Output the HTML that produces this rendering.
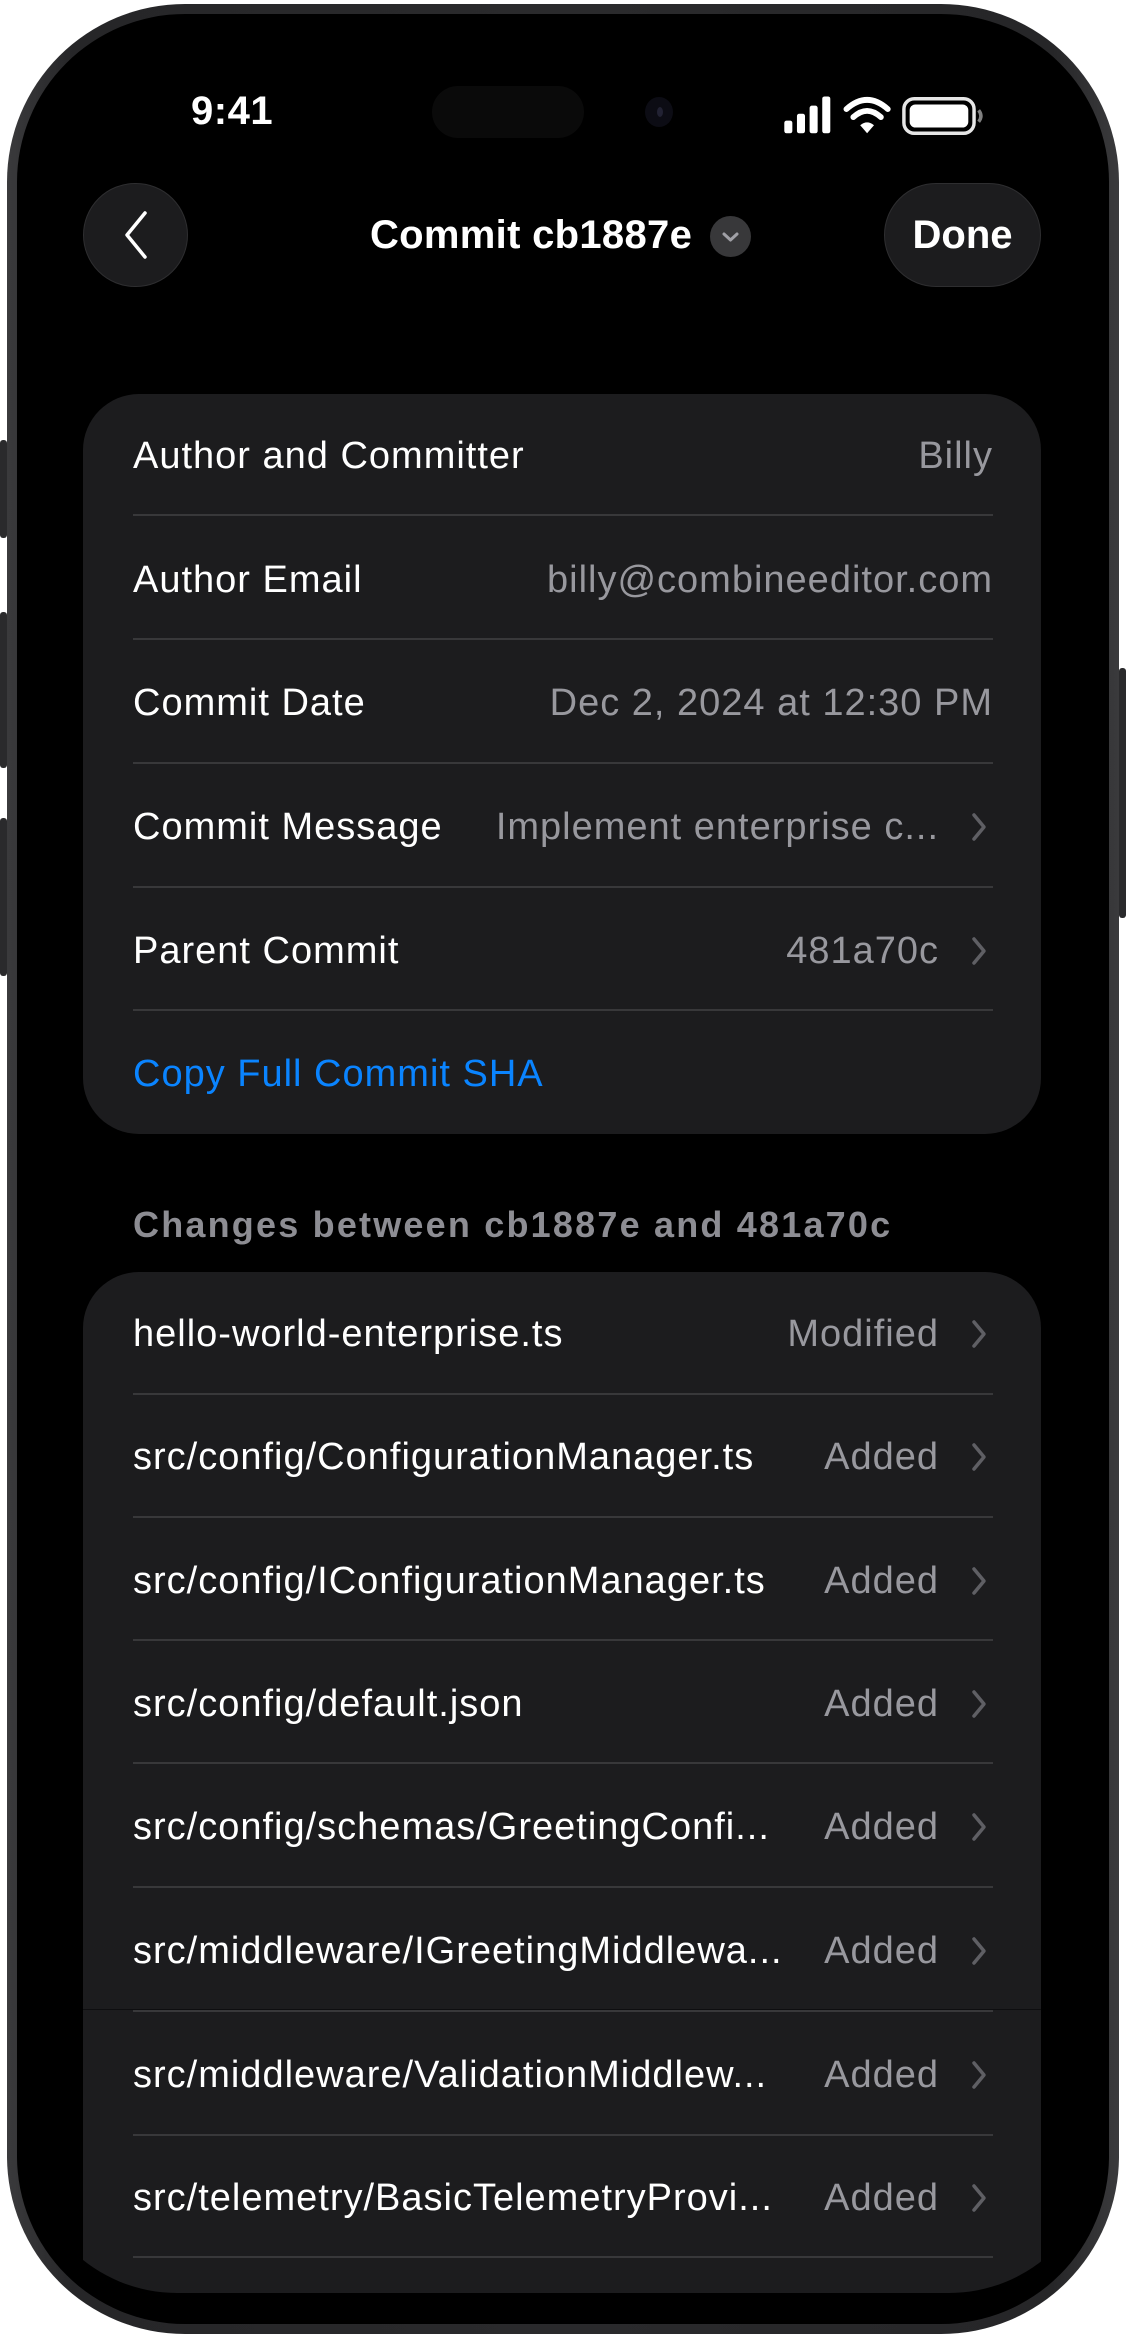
<!DOCTYPE html>
<html><head><meta charset="utf-8"><style>
*{margin:0;padding:0;box-sizing:border-box}
html,body{width:1126px;height:2338px;background:#fff;overflow:hidden;font-family:"Liberation Sans",sans-serif}
.abs{position:absolute}
#frame{left:7px;top:4px;width:1112px;height:2330px;border-radius:178px;background:linear-gradient(90deg,#3a3a3c,#262628 6%,#2a2a2c 50%,#262628 94%,#3a3a3c);}
#bezel{left:17px;top:14px;width:1092px;height:2310px;border-radius:168px;background:#000}
#screen{left:27px;top:27px;width:1072px;height:2266px;border-radius:150px;background:#000;overflow:hidden}
.btnside{background:#2a2a2c;border-radius:3px}
.white{color:#fff}
.card{position:absolute;left:56px;width:958px;background:#1c1c1e;border-radius:56px;overflow:hidden}
.row{position:absolute;left:50px;right:48px;height:124px;font-size:38px;letter-spacing:1px;color:#fff;display:flex;align-items:center;white-space:nowrap}
.row .l{flex:1;overflow:hidden}
.row .v{color:#98989e;margin-left:20px}
.row .c{width:16px;margin-left:32px;margin-right:6px;display:flex}
.sep{position:absolute;left:50px;right:48px;height:2px;background:#38383a}
</style></head><body>
<div id="frame" class="abs"></div>
<div class="abs btnside" style="left:0;top:440px;width:7px;height:98px"></div>
<div class="abs btnside" style="left:0;top:612px;width:7px;height:156px"></div>
<div class="abs btnside" style="left:0;top:818px;width:7px;height:158px"></div>
<div class="abs btnside" style="left:1119px;top:668px;width:7px;height:250px"></div>
<div id="bezel" class="abs"></div>
<div id="screen" class="abs">
  <div class="abs white" style="left:164px;top:62px;font-size:40px;font-weight:bold;letter-spacing:0.5px">9:41</div>
  <div class="abs" style="left:405px;top:59px;width:152px;height:52px;border-radius:26px;background:#0a0a0a"></div>
  <div class="abs" style="left:618px;top:70px;width:28px;height:30px;border-radius:50%;background:#0c0c14"></div>
  <div class="abs" style="left:630px;top:80px;width:6px;height:10px;border-radius:50%;background:#223"></div>
  <svg class="abs" style="left:755px;top:66px" width="276" height="46" viewBox="0 0 240 40">
    <rect x="2" y="24" width="7" height="11" rx="2" fill="#fff"/>
    <rect x="13" y="18" width="7" height="17" rx="2" fill="#fff"/>
    <rect x="24" y="11" width="7" height="24" rx="2" fill="#fff"/>
    <rect x="35" y="3" width="7" height="32" rx="2" fill="#fff"/>
    <path d="M56 14 Q74 -2 92 14" stroke="#fff" stroke-width="5" fill="none" stroke-linecap="round"/>
    <path d="M62 21 Q74 10 86 21" stroke="#fff" stroke-width="5" fill="none" stroke-linecap="round"/>
    <path d="M68 28 L74 35 L80 28 Q74 23 68 28Z" fill="#fff"/>
    <rect x="106" y="5" width="61" height="30" rx="9" fill="none" stroke="#fff" stroke-width="3" opacity="0.9"/>
    <rect x="111" y="10" width="51" height="20" rx="5" fill="#fff"/>
    <path d="M171 15 Q175 20 171 25" stroke="#fff" stroke-width="3" fill="none" opacity="0.5"/>
  </svg>
  <div class="abs" style="left:56px;top:156px;width:105px;height:104px;border-radius:52px;background:#1c1c1e;border:1.5px solid #2e2e30"></div>
  <svg class="abs" style="left:94px;top:182px" width="30" height="52" viewBox="0 0 30 52"><path d="M24 4 L6 26 L24 48" stroke="#fff" stroke-width="3.5" fill="none" stroke-linecap="round" stroke-linejoin="round"/></svg>
  <div class="abs white" style="left:343px;top:186px;font-size:40px;font-weight:bold;letter-spacing:0.3px">Commit cb1887e</div>
  <div class="abs" style="left:683px;top:189px;width:41px;height:41px;border-radius:50%;background:#38383a"></div>
  <svg class="abs" style="left:683px;top:189px" width="41" height="41" viewBox="0 0 41 41"><path d="M14 18 L20.5 24 L27 18" stroke="#a0a0a6" stroke-width="3" fill="none" stroke-linecap="round" stroke-linejoin="round"/></svg>
  <div class="abs white" style="left:857px;top:156px;width:157px;height:104px;border-radius:52px;background:#1c1c1e;border:1.5px solid #2e2e30;font-size:40px;font-weight:bold;display:flex;align-items:center;justify-content:center">Done</div>

  <div class="card" style="top:367px;height:740px">
    <div class="row" style="top:0"><span class="l">Author and Committer</span><span class="v">Billy</span></div>
    <div class="sep" style="top:120px"></div>
    <div class="row" style="top:124px"><span class="l">Author Email</span><span class="v">billy@combineeditor.com</span></div>
    <div class="sep" style="top:244px"></div>
    <div class="row" style="top:247px"><span class="l">Commit Date</span><span class="v">Dec 2, 2024 at 12:30 PM</span></div>
    <div class="sep" style="top:368px"></div>
    <div class="row" style="top:371px"><span class="l">Commit Message</span><span class="v">Implement enterprise c...</span><span class="c"><svg width="16" height="30" viewBox="0 0 16 30"><path d="M3 3 L13 15 L3 27" stroke="#5f5f64" stroke-width="3.5" fill="none" stroke-linecap="round" stroke-linejoin="round"/></svg></span></div>
    <div class="sep" style="top:492px"></div>
    <div class="row" style="top:495px"><span class="l">Parent Commit</span><span class="v">481a70c</span><span class="c"><svg width="16" height="30" viewBox="0 0 16 30"><path d="M3 3 L13 15 L3 27" stroke="#5f5f64" stroke-width="3.5" fill="none" stroke-linecap="round" stroke-linejoin="round"/></svg></span></div>
    <div class="sep" style="top:615px"></div>
    <div class="row" style="top:618px;color:#0a84ff"><span class="l">Copy Full Commit SHA</span></div>
  </div>

  <div class="abs" style="left:106px;top:1177px;font-size:36px;letter-spacing:2.2px;font-weight:bold;color:#8d8d93">Changes between cb1887e and 481a70c</div>

  <div class="card" style="top:1245px;height:1021px;border-bottom-left-radius:0;border-bottom-right-radius:0">
    <div class="row" style="top:0"><span class="l">hello-world-enterprise.ts</span><span class="v">Modified</span><span class="c"><svg width="16" height="30" viewBox="0 0 16 30"><path d="M3 3 L13 15 L3 27" stroke="#5f5f64" stroke-width="3.5" fill="none" stroke-linecap="round" stroke-linejoin="round"/></svg></span></div>
    <div class="sep" style="top:121px"></div>
    <div class="row" style="top:123px"><span class="l">src/config/ConfigurationManager.ts</span><span class="v">Added</span><span class="c"><svg width="16" height="30" viewBox="0 0 16 30"><path d="M3 3 L13 15 L3 27" stroke="#5f5f64" stroke-width="3.5" fill="none" stroke-linecap="round" stroke-linejoin="round"/></svg></span></div>
    <div class="sep" style="top:244px"></div>
    <div class="row" style="top:247px"><span class="l">src/config/IConfigurationManager.ts</span><span class="v">Added</span><span class="c"><svg width="16" height="30" viewBox="0 0 16 30"><path d="M3 3 L13 15 L3 27" stroke="#5f5f64" stroke-width="3.5" fill="none" stroke-linecap="round" stroke-linejoin="round"/></svg></span></div>
    <div class="sep" style="top:367px"></div>
    <div class="row" style="top:370px"><span class="l">src/config/default.json</span><span class="v">Added</span><span class="c"><svg width="16" height="30" viewBox="0 0 16 30"><path d="M3 3 L13 15 L3 27" stroke="#5f5f64" stroke-width="3.5" fill="none" stroke-linecap="round" stroke-linejoin="round"/></svg></span></div>
    <div class="sep" style="top:490px"></div>
    <div class="row" style="top:493px"><span class="l">src/config/schemas/GreetingConfi...</span><span class="v">Added</span><span class="c"><svg width="16" height="30" viewBox="0 0 16 30"><path d="M3 3 L13 15 L3 27" stroke="#5f5f64" stroke-width="3.5" fill="none" stroke-linecap="round" stroke-linejoin="round"/></svg></span></div>
    <div class="sep" style="top:614px"></div>
    <div class="row" style="top:617px"><span class="l">src/middleware/IGreetingMiddlewa...</span><span class="v">Added</span><span class="c"><svg width="16" height="30" viewBox="0 0 16 30"><path d="M3 3 L13 15 L3 27" stroke="#5f5f64" stroke-width="3.5" fill="none" stroke-linecap="round" stroke-linejoin="round"/></svg></span></div>
    <div class="abs" style="left:0;right:0;top:737px;height:1px;background:#0e0e10"></div>
    <div class="sep" style="top:738px"></div>
    <div class="row" style="top:741px"><span class="l">src/middleware/ValidationMiddlew...</span><span class="v">Added</span><span class="c"><svg width="16" height="30" viewBox="0 0 16 30"><path d="M3 3 L13 15 L3 27" stroke="#5f5f64" stroke-width="3.5" fill="none" stroke-linecap="round" stroke-linejoin="round"/></svg></span></div>
    <div class="sep" style="top:862px"></div>
    <div class="row" style="top:864px"><span class="l">src/telemetry/BasicTelemetryProvi...</span><span class="v">Added</span><span class="c"><svg width="16" height="30" viewBox="0 0 16 30"><path d="M3 3 L13 15 L3 27" stroke="#5f5f64" stroke-width="3.5" fill="none" stroke-linecap="round" stroke-linejoin="round"/></svg></span></div>
    <div class="sep" style="top:984px"></div>
  </div>
</div>
</body></html>
